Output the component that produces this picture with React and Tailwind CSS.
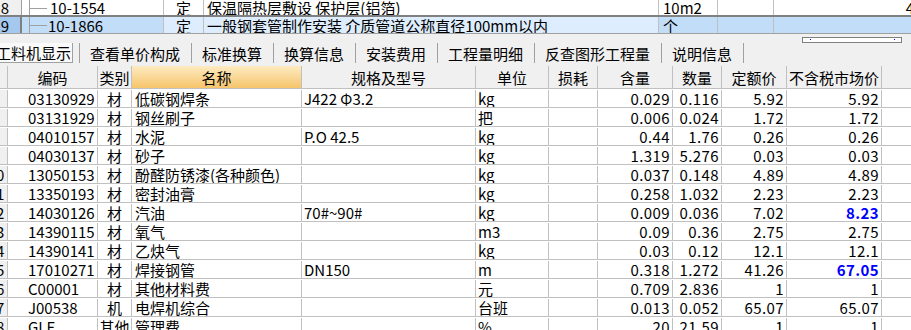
import React from 'react'

const items = [
  { no: 6, code: '03130929', type: '材', name: '低碳钢焊条', spec: 'J422 Φ3.2', unit: 'kg', qty: '0.029', amount: '0.116', price: '5.92', market: '5.92' },
  { no: 7, code: '03131929', type: '材', name: '钢丝刷子', spec: '', unit: '把', qty: '0.006', amount: '0.024', price: '1.72', market: '1.72' },
  { no: 8, code: '04010157', type: '材', name: '水泥', spec: 'P.O 42.5', unit: 'kg', qty: '0.44', amount: '1.76', price: '0.26', market: '0.26' },
  { no: 9, code: '04030137', type: '材', name: '砂子', spec: '', unit: 'kg', qty: '1.319', amount: '5.276', price: '0.03', market: '0.03' },
  { no: 10, code: '13050153', type: '材', name: '酚醛防锈漆(各种颜色)', spec: '', unit: 'kg', qty: '0.037', amount: '0.148', price: '4.89', market: '4.89' },
  { no: 11, code: '13350193', type: '材', name: '密封油膏', spec: '', unit: 'kg', qty: '0.258', amount: '1.032', price: '2.23', market: '2.23' },
  { no: 12, code: '14030126', type: '材', name: '汽油', spec: '70#~90#', unit: 'kg', qty: '0.009', amount: '0.036', price: '7.02', market: '8.23', changed: true },
  { no: 13, code: '14390115', type: '材', name: '氧气', spec: '', unit: 'm3', qty: '0.09', amount: '0.36', price: '2.75', market: '2.75' },
  { no: 14, code: '14390141', type: '材', name: '乙炔气', spec: '', unit: 'kg', qty: '0.03', amount: '0.12', price: '12.1', market: '12.1' },
  { no: 15, code: '17010271', type: '材', name: '焊接钢管', spec: 'DN150', unit: 'm', qty: '0.318', amount: '1.272', price: '41.26', market: '67.05', changed: true },
  { no: 16, code: 'C00001', type: '材', name: '其他材料费', spec: '', unit: '元', qty: '0.709', amount: '2.836', price: '1', market: '1' },
  { no: 17, code: 'J00538', type: '机', name: '电焊机综合', spec: '', unit: '台班', qty: '0.013', amount: '0.052', price: '65.07', market: '65.07' },
  { no: 18, code: 'GLF', type: '其他', name: '管理费', spec: '', unit: '%', qty: '20', amount: '21.59', price: '1', market: '1' },
]

const tabs = ['查看单价构成', '标准换算', '换算信息', '安装费用', '工程量明细', '反查图形工程量', '说明信息']

const cols = 'grid grid-cols-[8px_90px_34px_170px_174px_73px_49px_75px_49px_65px_95px_40px]'
const topCols = 'grid grid-cols-[22px_142px_40px_455px_59px_56px_140px]'
const cell = 'border-r border-[#c0c0c0] overflow-hidden whitespace-nowrap flex items-center'
const num = 'justify-end pr-[2px] tracking-[0.4px]'

function HeadCell({ children, accent }) {
  return (
    <div
      className={`${cell} justify-center ${
        accent ? 'bg-gradient-to-b from-[#fdebc0] to-[#f6c46a]' : 'bg-[#f0f0f0]'
      }`}
    >
      {children}
    </div>
  )
}

function TreeLine() {
  return (
    <>
      <span className="absolute left-[7px] top-0 bottom-0 w-px bg-[#a0a0a0]" />
      <span className="absolute left-[8px] top-1/2 w-[17px] h-px bg-[#a0a0a0]" />
    </>
  )
}

export default function App() {
  return (
    <div className="w-[911px] h-[330px] overflow-hidden bg-white text-[15px] leading-none text-black font-['Noto_Sans_CJK_SC',sans-serif]">
      {/* upper list: sub items */}
      <div className={`${topCols} h-[15px]`}>
        <div className="bg-[#f0f0f0] border-r border-[#a0a0a0] flex justify-end items-center pr-[12px] overflow-hidden">18</div>
        <div className={`${cell} relative pl-[28px]`}>
          <TreeLine />
          10-1554
        </div>
        <div className={`${cell} justify-center`}>定</div>
        <div className={`${cell} pl-[3px]`}>保温隔热层敷设 保护层(铝箔)</div>
        <div className={`${cell} pl-[4px]`}>10m2</div>
        <div className={cell} />
        <div className="flex items-center justify-end overflow-hidden">4</div>
      </div>
      <div className={`${topCols} h-[18px] border-t-2 border-[#808080]`}>
        <div className="bg-[#a4c8ee] border-r-2 border-[#808080] flex justify-end items-center pr-[11px] overflow-hidden">19</div>
        <div className={`${cell} relative pl-[26px] bg-[#c2ddf8]`}>
          <TreeLine />
          10-1866
        </div>
        <div className={`${cell} justify-center bg-[#deedfd]`}>定</div>
        <div className={`${cell} pl-[3px] bg-[#deedfd]`}>一般钢套管制作安装 介质管道公称直径100mm以内</div>
        <div className={`${cell} pl-[4px] bg-[#c2ddf8]`}>个</div>
        <div className={`${cell} bg-[#c2ddf8]`} />
        <div className="bg-[#c2ddf8]" />
      </div>

      {/* tab strip */}
      <div className="relative h-[33px] bg-[#f0f0f0] border-t border-[#a0a0a0]">
        <div className="absolute left-[802px] top-[3px] w-[100px] h-[6px] border border-[#808080] bg-white">
          <span className="absolute left-[7px] top-[1px] w-px h-px bg-[#0000ff]" />
          <span className="absolute right-[6px] top-[1px] w-px h-px bg-[#0000ff]" />
        </div>
        <div className="flex h-[20px] mt-[9px] items-stretch">
          <div className="w-[73px] flex items-center justify-end pr-[1px] bg-[#fafafa] border-r border-b border-[#a0a0a0] overflow-hidden whitespace-nowrap">
            工料机显示
          </div>
          <div className="w-[6px]" />
          {tabs.map((t) => (
            <div key={t} className="flex items-stretch">
              <div className="w-px bg-[#a0a0a0]" />
              <div className="pl-[10px] pr-[11px] flex items-center whitespace-nowrap">{t}</div>
            </div>
          ))}
          <div className="w-px bg-[#a0a0a0]" />
        </div>
      </div>

      {/* material grid */}
      <div className={`${cols} h-[23px] border-b border-[#c0c0c0]`}>
        <HeadCell />
        <HeadCell>编码</HeadCell>
        <HeadCell>类别</HeadCell>
        <HeadCell accent>名称</HeadCell>
        <HeadCell>规格及型号</HeadCell>
        <HeadCell>单位</HeadCell>
        <HeadCell>损耗</HeadCell>
        <HeadCell>含量</HeadCell>
        <HeadCell>数量</HeadCell>
        <HeadCell>定额价</HeadCell>
        <HeadCell>不含税市场价</HeadCell>
        <HeadCell />
      </div>
      {items.map((r) => (
        <div key={r.code} className={`${cols} h-[19px] border-b border-[#c0c0c0] pt-[1px]`}>
          <div className={`${cell} bg-[#f0f0f0]`}>
            <div className="w-[18px] shrink-0 ml-[-13px] text-center">{r.no}</div>
          </div>
          <div className={`${cell} pl-[20px]`}>{r.code}</div>
          <div className={`${cell} justify-center`}>{r.type}</div>
          <div className={`${cell} pl-[3px]`}>{r.name}</div>
          <div className={`${cell} pl-[2px]`}>{r.spec}</div>
          <div className={`${cell} pl-[2px]`}>{r.unit}</div>
          <div className={cell} />
          <div className={`${cell} ${num}`}>{r.qty}</div>
          <div className={`${cell} ${num}`}>{r.amount}</div>
          <div className={`${cell} ${num}`}>{r.price}</div>
          <div className={`${cell} ${num} ${r.changed ? 'text-[#0000ff] font-bold' : ''}`}>
            {r.market}
          </div>
          <div className={cell} />
        </div>
      ))}
    </div>
  )
}
